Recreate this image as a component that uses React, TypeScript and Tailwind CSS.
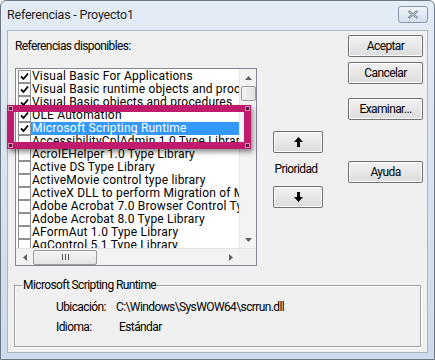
import { Fragment } from "react";

const rows: { label: string; checked: boolean; selected?: boolean }[] = [
  { label: "Visual Basic For Applications", checked: true },
  { label: "Visual Basic runtime objects and procedures", checked: true },
  { label: "Visual Basic objects and procedures", checked: true },
  { label: "OLE Automation", checked: true },
  { label: "Microsoft Scripting Runtime", checked: true, selected: true },
  { label: "AccessibilityCplAdmin 1.0 Type Library", checked: false },
  { label: "AcroIEHelper 1.0 Type Library", checked: false },
  { label: "Active DS Type Library", checked: false },
  { label: "ActiveMovie control type library", checked: false },
  { label: "ActiveX DLL to perform Migration of MS Repository", checked: false },
  { label: "Adobe Acrobat 7.0 Browser Control Type Library", checked: false },
  { label: "Adobe Acrobat 8.0 Type Library", checked: false },
  { label: "AFormAut 1.0 Type Library", checked: false },
  { label: "AgControl 5.1 Type Library", checked: false },
];

const font = { fontFamily: '"Segoe UI", Roboto, "Liberation Sans", sans-serif' };

function Check({ on }: { on: boolean }) {
  return (
    <span className="w-[13px] h-[13px] shrink-0 border border-[#8f8f8f] bg-white flex items-center justify-center">
      {on && (
        <svg width="9" height="9" viewBox="0 0 9 9">
          <path d="M1 4.5 L3.5 7 L8 1.5" fill="none" stroke="#000" strokeWidth="1.8" />
        </svg>
      )}
    </span>
  );
}

function Btn({ children, className = "" }: { children: React.ReactNode; className?: string }) {
  return (
    <div
      className={
        "h-[22px] border border-[#707070] rounded-[2px] bg-gradient-to-b from-[#f2f2f2] to-[#dcdcdc] flex items-center justify-center text-[12px] tracking-[-0.6px] text-black shadow-[inset_0_0_0_1px_#fcfcfc] " +
        className
      }
    >
      {children}
    </div>
  );
}

function Arrow({ dir }: { dir: "up" | "down" | "left" | "right" }) {
  const d = {
    up: "M0 4 L3.5 0 L7 4 Z",
    down: "M0 0 L3.5 4 L7 0 Z",
    left: "M4 0 L0 3.5 L4 7 Z",
    right: "M0 0 L4 3.5 L0 7 Z",
  }[dir];
  const vert = dir === "up" || dir === "down";
  return (
    <svg width={vert ? 7 : 4} height={vert ? 4 : 7} viewBox={vert ? "0 0 7 4" : "0 0 4 7"}>
      <path d={d} fill="#606060" />
    </svg>
  );
}

export default function App() {
  return (
    <div
      className="w-[435px] h-[360px] bg-gradient-to-b from-[#e4ecf6] to-[#cbdaec] border border-[#6f7a87] rounded-t-[6px] flex flex-col text-black"
      style={font}
    >
      {/* title bar */}
      <div className="h-[29px] flex items-center justify-between pl-[6px] pr-[6px]">
        <span className="text-[12.5px] tracking-[-0.2px] text-[#1e1e1e]">Referencias - Proyecto1</span>
        <div className="w-[30px] h-[17px] -mt-[2px] border border-[#8a96a5] rounded-[3px] bg-gradient-to-b from-[#f1f5fa] to-[#d3dfec] flex items-center justify-center">
          <svg width="12" height="9" viewBox="0 0 12 9">
            <path d="M1.5 1 L10.5 8 M10.5 1 L1.5 8" stroke="#5b6470" strokeWidth="2.2" />
            <path d="M1.5 1 L10.5 8 M10.5 1 L1.5 8" stroke="#f4f7fb" strokeWidth="0.8" />
          </svg>
        </div>
      </div>

      {/* client area */}
      <div className="mx-[6px] mb-[6px] flex-1 bg-[#f0f0f0] border border-[#a9b6c6] flex flex-col text-[12px] tracking-[-0.6px]">
        <div className="flex pt-[4px]">
          {/* left */}
          <div className="flex flex-col pl-[7px]">
            <div className="h-[22px] leading-[22px]">Referencias disponibles:</div>
            <div className="relative mt-[11px] w-[242px] h-[198px] border border-[#828790] bg-white flex flex-col tracking-normal">
              <div className="flex flex-1 min-h-0">
                <div className="flex-1 overflow-hidden pt-[1px] text-[12px] tracking-[0.2px]">
                  {rows.map((r, i) => (
                    <div key={i} className="h-[13px] flex items-center pl-[2px] whitespace-nowrap leading-[13px]">
                      <Check on={r.checked} />
                      <span
                        className={
                          "pl-[1px] pr-[2px] h-[13px] leading-[13px] " +
                          (r.selected ? "bg-[#3399ff] text-white flex-1" : "")
                        }
                      >
                        {r.label}
                      </span>
                    </div>
                  ))}
                </div>
                {/* vertical scrollbar */}
                <div className="w-[17px] bg-[#f3f3f3] border-l border-[#e6e6e6] flex flex-col items-center">
                  <div className="h-[17px] flex items-center justify-center">
                    <Arrow dir="up" />
                  </div>
                  <div className="w-[15px] h-[15px] border border-[#9a9a9a] rounded-[2px] bg-gradient-to-r from-[#f4f4f4] to-[#e2e2e2]" />
                  <div className="flex-1" />
                  <div className="h-[17px] flex items-center justify-center">
                    <Arrow dir="down" />
                  </div>
                </div>
              </div>
              {/* horizontal scrollbar */}
              <div className="h-[17px] flex bg-[#f3f3f3] border-t border-[#e6e6e6]">
                <div className="flex-1 flex items-center">
                  <div className="w-[17px] flex justify-center">
                    <Arrow dir="left" />
                  </div>
                  <div className="w-[64px] h-[15px] border border-[#9a9a9a] rounded-[2px] bg-gradient-to-b from-[#f6f6f6] to-[#e3e3e3] flex items-center justify-center gap-[2px]">
                    <span className="w-[1px] h-[6px] bg-[#555]" />
                    <span className="w-[1px] h-[6px] bg-[#555]" />
                    <span className="w-[1px] h-[6px] bg-[#555]" />
                  </div>
                  <div className="flex-1" />
                  <div className="w-[17px] flex justify-center">
                    <Arrow dir="right" />
                  </div>
                </div>
                <div className="w-[17px] bg-[#f0f0f0]" />
              </div>

              {/* highlight frame */}
              <div className="absolute left-[-9px] top-[36px] w-[244px] h-[44px] border-[7px] border-[#c01a6c] shadow-[2px_3px_5px_rgba(0,0,0,0.45)]">
                {[
                  "-left-[6px] -top-[6px]",
                  "-right-[6px] -top-[6px]",
                  "-left-[6px] -bottom-[6px]",
                  "-right-[6px] -bottom-[6px]",
                ].map((p, i) => (
                  <Fragment key={i}>
                    <span className={"absolute w-[5px] h-[5px] bg-[#5b1b3b] border border-[#d58bb0] " + p} />
                  </Fragment>
                ))}
              </div>
            </div>
          </div>

          {/* priority */}
          <div className="flex flex-col items-center w-[50px] ml-[16px] pt-[96px]">
            <Btn className="w-[50px] h-[22px]">
              <svg width="9" height="10" viewBox="0 0 9 10">
                <path d="M4.5 0 L9 5 L6 5 L6 10 L3 10 L3 5 L0 5 Z" fill="#000" />
              </svg>
            </Btn>
            <div className="h-[33px] leading-[33px] -ml-[4px]">Prioridad</div>
            <Btn className="w-[50px] h-[22px]">
              <svg width="9" height="10" viewBox="0 0 9 10">
                <path d="M4.5 10 L9 5 L6 5 L6 0 L3 0 L3 5 L0 5 Z" fill="#000" />
              </svg>
            </Btn>
          </div>

          {/* main buttons */}
          <div className="flex flex-col ml-[25px] w-[75px]">
            <Btn>Aceptar</Btn>
            <Btn className="mt-[5px]">Cancelar</Btn>
            <Btn className="mt-[14px]">Examinar...</Btn>
            <Btn className="mt-[41px]">Ayuda</Btn>
          </div>
        </div>

        {/* group box */}
        <div className="relative mt-[19px] mx-[6px] h-[62px] border border-[#a0a0a0] shadow-[inset_1px_1px_0_#fff,1px_1px_0_#fff]">
          <span className="absolute -top-[8px] left-[7px] px-[1px] bg-[#f0f0f0] leading-[15px]">
            Microsoft Scripting Runtime
          </span>
          <div className="grid grid-cols-[60px_1fr] pl-[41px] pt-[14px] gap-y-[6px] leading-[14px]">
            <span>Ubicación:</span>
            <span>C:\Windows\SysWOW64\scrrun.dll</span>
            <span>Idioma:</span>
            <span className="pl-[3px]">Estándar</span>
          </div>
        </div>
      </div>
    </div>
  );
}
